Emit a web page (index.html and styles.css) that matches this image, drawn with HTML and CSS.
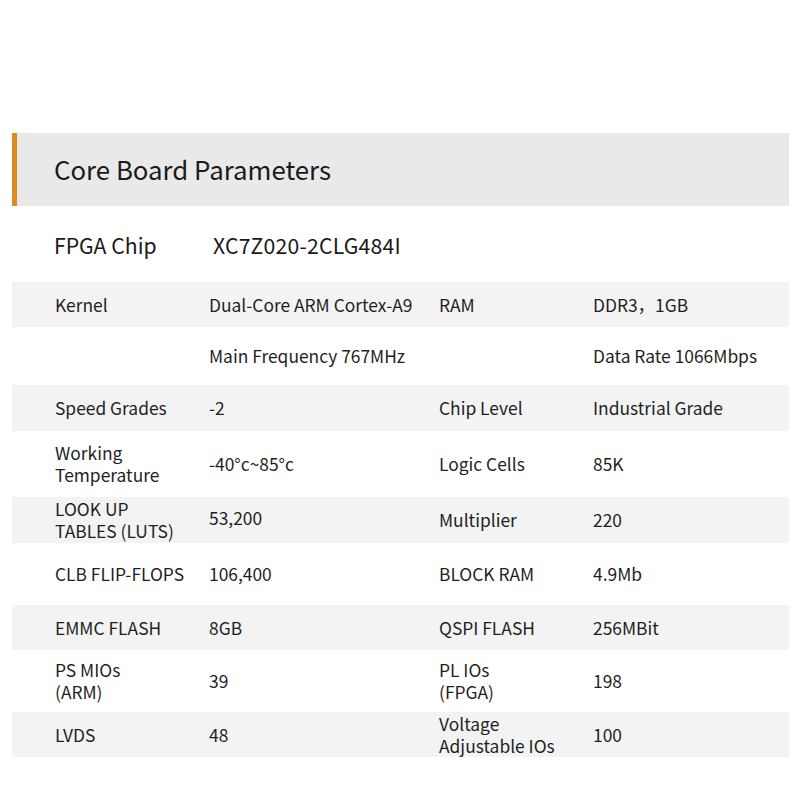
FILE: index.html
```html
<!DOCTYPE html>
<html>
<head>
<meta charset="utf-8">
<link rel="stylesheet" href="styles.css">
</head>
<body>
<div class="page">
  <div class="header"><span class="title">Core Board Parameters</span></div>
  <div class="chip-row">
    <span class="chip-label">FPGA Chip</span>
    <span class="chip-value">XC7Z020-2CLG484I</span>
  </div>
  <div class="table">
    <div class="row gray h45">
      <div class="c1">Kernel</div><div class="c2">Dual-Core ARM Cortex-A9</div>
      <div class="c3">RAM</div><div class="c4">DDR3，1GB</div>
    </div>
    <div class="row h58">
      <div class="c1"></div><div class="c2">Main Frequency 767MHz</div>
      <div class="c3"></div><div class="c4">Data Rate 1066Mbps</div>
    </div>
    <div class="row gray h46">
      <div class="c1">Speed Grades</div><div class="c2">-2</div>
      <div class="c3">Chip Level</div><div class="c4">Industrial Grade</div>
    </div>
    <div class="row h66">
      <div class="c1 two"><span class="ln">Working</span><span class="ln">Temperature</span></div><div class="c2">-40°c~85°c</div>
      <div class="c3">Logic Cells</div><div class="c4">85K</div>
    </div>
    <div class="row gray h46">
      <div class="c1 two"><span class="ln">LOOK UP</span><span class="ln">TABLES (LUTS)</span></div><div class="c2 up">53,200</div>
      <div class="c3">Multiplier</div><div class="c4">220</div>
    </div>
    <div class="row h62">
      <div class="c1">CLB FLIP-FLOPS</div><div class="c2">106,400</div>
      <div class="c3">BLOCK RAM</div><div class="c4">4.9Mb</div>
    </div>
    <div class="row gray h45">
      <div class="c1">EMMC FLASH</div><div class="c2">8GB</div>
      <div class="c3">QSPI FLASH</div><div class="c4">256MBit</div>
    </div>
    <div class="row h62">
      <div class="c1 two"><span class="ln">PS MIOs</span><span class="ln">(ARM)</span></div><div class="c2">39</div>
      <div class="c3 two"><span class="ln">PL IOs</span><span class="ln">(FPGA)</span></div><div class="c4">198</div>
    </div>
    <div class="row gray h45">
      <div class="c1">LVDS</div><div class="c2">48</div>
      <div class="c3 two"><span class="ln">Voltage</span><span class="ln">Adjustable IOs</span></div><div class="c4">100</div>
    </div>
  </div>
</div>
</body>
</html>
```
FILE: styles.css
```css
html, body {
  margin: 0;
  padding: 0;
  background: #ffffff;
}
body {
  font-family: "Noto Sans CJK SC", "Noto Sans", sans-serif;
  color: #1f1f1f;
  width: 800px;
  height: 800px;
  overflow: hidden;
}
.page {
  padding: 133px 11px 0 12px;
}
.header {
  height: 73px;
  background: #e9e9e9;
  border-left: 5px solid #dc8a22;
  display: flex;
  align-items: center;
  padding-left: 37px;
  box-sizing: border-box;
}
.title {
  font-size: 25.8px;
  color: #1a1a1a;
  margin-top: -2px;
}
.chip-row {
  height: 76px;
  display: flex;
  align-items: center;
  padding-left: 42px;
  font-size: 21.2px;
  color: #1a1a1a;
}
.chip-label {
  width: 159px;
}
.chip-value {
  letter-spacing: 0.2px;
}
.row {
  display: grid;
  grid-template-columns: 197px 230px 154px 196px;
  align-items: center;
  font-size: 17.4px;
  line-height: 22px;
}
.row.gray {
  background: #f3f3f3;
}
.h45 { height: 45px; }
.h46 { height: 46px; }
.h58 { height: 58px; }
.h62 { height: 62px; }
.h66 { height: 66px; }
.c1 {
  padding-left: 43px;
}
.two {
  display: flex;
  flex-direction: column;
  line-height: 1;
  gap: 4px;
}
.ln {
  display: block;
  line-height: 18px;
}
.up {
  margin-top: -4px;
}
```
